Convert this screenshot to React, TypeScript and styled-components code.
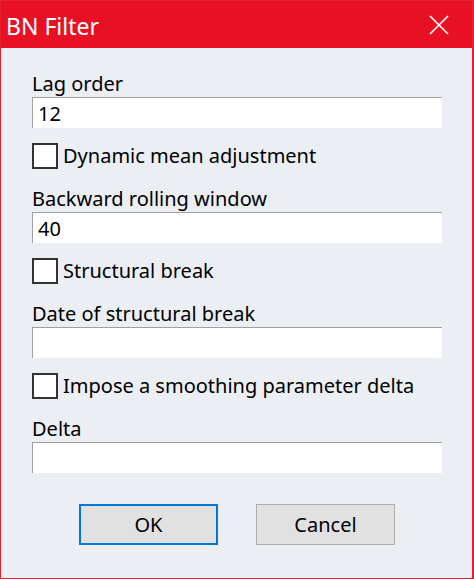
import React from "react";
import styled, { createGlobalStyle } from "styled-components";

const GlobalStyle = createGlobalStyle`
  html, body {
    margin: 0;
    padding: 0;
    background: #ffffff;
  }
  * {
    box-sizing: border-box;
  }
`;

const fields = [
  { label: "Lag order", value: "12", check: "Dynamic mean adjustment" },
  { label: "Backward rolling window", value: "40", check: "Structural break" },
  { label: "Date of structural break", value: "", check: "Impose a smoothing parameter delta" },
  { label: "Delta", value: "", check: "" },
];

const App = () => {
  return (
    <>
      <GlobalStyle />
      <Window>
        <TitleBar>
          <Title>BN Filter</Title>
          <CloseButton aria-label="Close">
            <svg width="20" height="20" viewBox="0 0 20 20">
              <path d="M1 1 L19 19 M19 1 L1 19" stroke="#ffffff" strokeWidth="1.6" />
            </svg>
          </CloseButton>
        </TitleBar>
        <Body>
          {fields.map((f) => (
            <Group key={f.label}>
              <Label>{f.label}</Label>
              <TextBox defaultValue={f.value} />
              {f.check && (
                <CheckRow>
                  <CheckBox />
                  <CheckLabel>{f.check}</CheckLabel>
                </CheckRow>
              )}
            </Group>
          ))}
          <Buttons>
            <Button primary>OK</Button>
            <Button>Cancel</Button>
          </Buttons>
        </Body>
      </Window>
    </>
  );
};

const Window = styled.div`
  width: 474px;
  height: 579px;
  border: 1px solid #e8202e;
  border-right-width: 2px;
  background: #ebeef3;
  display: flex;
  flex-direction: column;
  font-family: "Noto Sans", "Open Sans", sans-serif;
`;

const TitleBar = styled.div`
  height: 47px;
  flex-shrink: 0;
  background: #e81123;
  display: flex;
  align-items: center;
  justify-content: space-between;
  padding: 0 23px 0 5px;
  color: #ffffff;
`;

const Title = styled.div`
  font-size: 23px;
  line-height: 1;
  margin-top: 3px;
`;

const CloseButton = styled.div`
  display: flex;
  align-items: center;
  margin-top: 1px;
`;

const Body = styled.div`
  flex: 1;
  padding: 22px 31px 0 31px;
  display: flex;
  flex-direction: column;
`;

const Group = styled.div`
  display: flex;
  flex-direction: column;
`;

const Label = styled.div`
  font-size: 20px;
  line-height: 27px;
  color: #000000;
`;

const TextBox = styled.input`
  width: 410px;
  height: 31px;
  border: none;
  border-top: 1px solid #a0a0a0;
  border-left: 1px solid #a0a0a0;
  background: #ffffff;
  font-family: inherit;
  font-size: 20px;
  padding: 0 0 0 5px;
  color: #000000;
  outline: none;
`;

const CheckRow = styled.div`
  display: flex;
  align-items: center;
  gap: 5px;
  height: 26px;
  margin-top: 15px;
  margin-bottom: 16px;
`;

const CheckBox = styled.div`
  width: 26px;
  height: 26px;
  border: 2px solid #333333;
  background: #ffffff;
`;

const CheckLabel = styled.div`
  font-size: 20px;
  line-height: 26px;
  color: #000000;
`;

const Buttons = styled.div`
  display: flex;
  gap: 38px;
  margin-top: 31px;
  padding-left: 47px;
`;

const Button = styled.div<{ primary?: boolean }>`
  width: 139px;
  height: 41px;
  background: #e1e1e1;
  border: ${(p) => (p.primary ? "2px solid #0078d7" : "1px solid #adadad")};
  display: flex;
  align-items: center;
  justify-content: center;
  font-size: 20px;
  color: #000000;
`;

export default App;
